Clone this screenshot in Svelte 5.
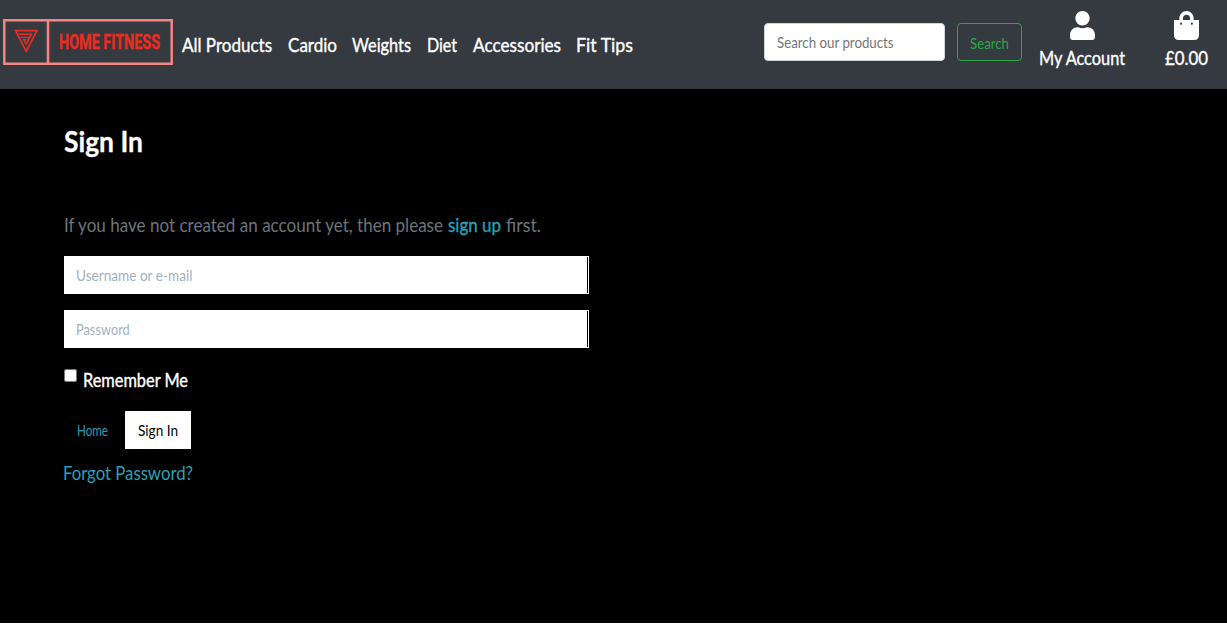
<script>
  const links = [
    ['All Products', 90],
    ['Cardio', 49],
    ['Weights', 59],
    ['Diet', 30],
    ['Accessories', 88],
    ['Fit Tips', 57]
  ];
</script>

{#snippet label(text, width, kind)}
  <svg class="label {kind}" {width} height="30">
    <text x="0" y="22" textLength={width} lengthAdjust="spacingAndGlyphs">{text}</text>
  </svg>
{/snippet}

<header>
  <svg class="logo" width="170" height="46" viewBox="0 0 170 46">
    <path d="M1.3 1.3H168.7V44.7H1.3ZM45 1V45" fill="none" stroke="#f48583" stroke-width="2.5" />
    <path d="M12.500 11.600H34L23.200 32.500Z" fill="none" stroke="#ed2c20" stroke-width="1.700" />
    <path d="M15.500 15.300H28.200L24.600 22.500" fill="none" stroke="#ed2c20" stroke-width="1.600" />
    <path d="M17.500 18.400H26.200L23.200 25L20.600 20.800H23" fill="none" stroke="#ed2c20" stroke-width="1.400" />
    <text x="56" y="30" textLength="101" lengthAdjust="spacingAndGlyphs">HOME FITNESS</text>
  </svg>
  <nav>
    {#each links as [text, width]}
      <a href="#top">{@render label(text, width, 'strong')}</a>
    {/each}
  </nav>
  <div class="field search"><input aria-label="Search" placeholder="Search our products" /></div>
  <button class="find">{@render label('Search', 39, 'small')}</button>
  <a class="tool account" href="#account">
    <svg width="25" height="29" viewBox="0 0 448 512" preserveAspectRatio="none">
      <path fill="#fff" d="M224 256c70.7 0 128-57.3 128-128S294.700 0 224 0 96 57.300 96 128s57.300 128 128 128zm89.600 32h-16.700c-22.200 10.200-46.900 16-72.900 16s-50.600-5.800-72.900-16h-16.700C60.200 288 0 348.200 0 422.400V464c0 26.500 21.500 48 48 48h352c26.500 0 48-21.500 48-48v-41.600c0-74.200-60.200-134.400-134.400-134.400z" />
    </svg>
    {@render label('My Account', 86, 'strong')}
  </a>
  <a class="tool bag" href="#bag">
    <svg width="25" height="29" viewBox="0 0 448 512" preserveAspectRatio="none">
      <path fill="#fff" d="M352 160v-32C352 57.420 294.579 0 224 0 153.420 0 96 57.420 96 128v32H0v272c0 44.183 35.817 80 80 80h288c44.183 0 80-35.817 80-80V160h-96zm-192-32c0-35.290 28.710-64 64-64s64 28.710 64 64v32H160v-32z" />
      <circle cx="128" cy="224" r="19" fill="#343a40" />
      <circle cx="320" cy="224" r="19" fill="#343a40" />
    </svg>
    {@render label('£0.00', 43, 'strong')}
  </a>
</header>

<main>
  <h1>{@render label('Sign In', 79, 'title')}</h1>
  <p>
    {@render label('If you have not created an account yet, then please', 379, 'muted')}
    <a href="#signup">{@render label('sign up', 53, 'link strong-link')}</a>
    {@render label('first.', 35, 'muted')}
  </p>
  <form>
    <div class="field login user"><input aria-label="Username" placeholder="Username or e-mail" /></div>
    <div class="field login pass"><input aria-label="Password" type="password" placeholder="Password" /></div>
    <label class="remember">
      <input type="checkbox" />
      {@render label('Remember Me', 105, 'strong')}
    </label>
    <div class="actions">
      <a href="#home">{@render label('Home', 31, 'small link')}</a>
      <button type="button" class="submit">{@render label('Sign In', 40, 'small')}</button>
    </div>
    <a class="forgot" href="#forgot">{@render label('Forgot Password?', 130, 'link')}</a>
  </form>
</main>

<style>
  :global(body) {
    margin: 0;
    background: #fff;
    font-family: Lato, sans-serif;
  }
  a {
    color: inherit;
    text-decoration: none;
  }
  svg {
    display: block;
    flex: none;
  }
  .label {
    overflow: visible;
    font-size: 20px;
    fill: currentColor;
  }
  .strong {
    color: #fff;
    stroke: #fff;
    stroke-width: 0.4px;
  }
  .small {
    font-size: 16px;
  }
  .title {
    font-size: 29px;
    color: #fff;
    stroke: #fff;
    stroke-width: 0.3px;
  }
  .muted {
    color: #6c757d;
  }
  .link {
    color: #2a9fb6;
  }
  .strong-link {
    stroke: #2a9fb6;
    stroke-width: 0.4px;
  }
  header {
    display: flex;
    box-sizing: border-box;
    height: 89px;
    padding-left: 3px;
    background: #343a40;
    align-items: flex-start;
  }
  .logo {
    margin-top: 19px;
    overflow: visible;
  }
  .logo text {
    font: 700 20.5px Roboto, sans-serif;
    fill: #ed2c20;
    stroke: #ed2c20;
    stroke-width: 0.3px;
  }
  nav {
    display: flex;
    gap: 15.7px;
    margin: 30px auto 0 9px;
  }
  .field {
    box-sizing: border-box;
    height: 38px;
    background: #fff;
    overflow: hidden;
  }
  .field input {
    display: block;
    box-sizing: border-box;
    height: 100%;
    border: 0;
    padding: 0 0 2px;
    margin-left: 12px;
    outline: 0;
    background: transparent;
    font: 16px Lato, sans-serif;
    transform: scaleX(0.83);
    transform-origin: left;
  }
  .search {
    width: 181px;
    margin-top: 23px;
    border: 1px solid #ced4da;
    border-radius: 4px;
  }
  .search input::placeholder {
    color: #757575;
  }
  button {
    box-sizing: border-box;
    height: 38px;
    padding: 0 0 1px 12px;
    background: transparent;
    font-family: inherit;
  }
  .find {
    width: 65px;
    margin: 23px 17px 0 12px;
    border: 1px solid #28a745;
    border-radius: 4px;
    color: #28a745;
  }
  .tool {
    display: flex;
    flex-direction: column;
    align-items: center;
    gap: 3px;
    padding-top: 11px;
  }
  .account {
    margin-right: 40px;
  }
  .bag {
    margin-right: 19px;
  }
  main {
    box-sizing: border-box;
    height: 534px;
    padding: 41px 64px 0;
    background: #000;
  }
  h1 {
    margin: 0;
  }
  p {
    display: flex;
    gap: 5px;
    margin: 50px 0 16px;
  }
  .login {
    width: 525px;
    margin-bottom: 16px;
    border: 1px solid #fff;
    box-shadow: inset -1px 0 #000;
  }
  .login input {
    margin-left: 11px;
  }
  .login input::placeholder {
    color: #a3b1c0;
    opacity: 1;
  }
  .pass input {
    transform: scaleX(0.8);
  }
  .user input {
    transform: scaleX(0.85);
  }
  .remember {
    display: flex;
    gap: 6px;
    margin-top: 17px;
  }
  .remember input {
    width: 13px;
    height: 13px;
    margin: 4px 0 0;
  }
  .actions {
    display: flex;
    align-items: center;
    gap: 17px;
    margin: 16px 0 9px;
    padding-left: 13px;
  }
  .actions a {
    padding-bottom: 2px;
  }
  .submit {
    width: 66px;
    padding: 0 0 2px 13px;
    border: 0;
    background: #fff;
    color: #000;
  }
  .forgot {
    display: block;
    margin-left: -1px;
  }
</style>
